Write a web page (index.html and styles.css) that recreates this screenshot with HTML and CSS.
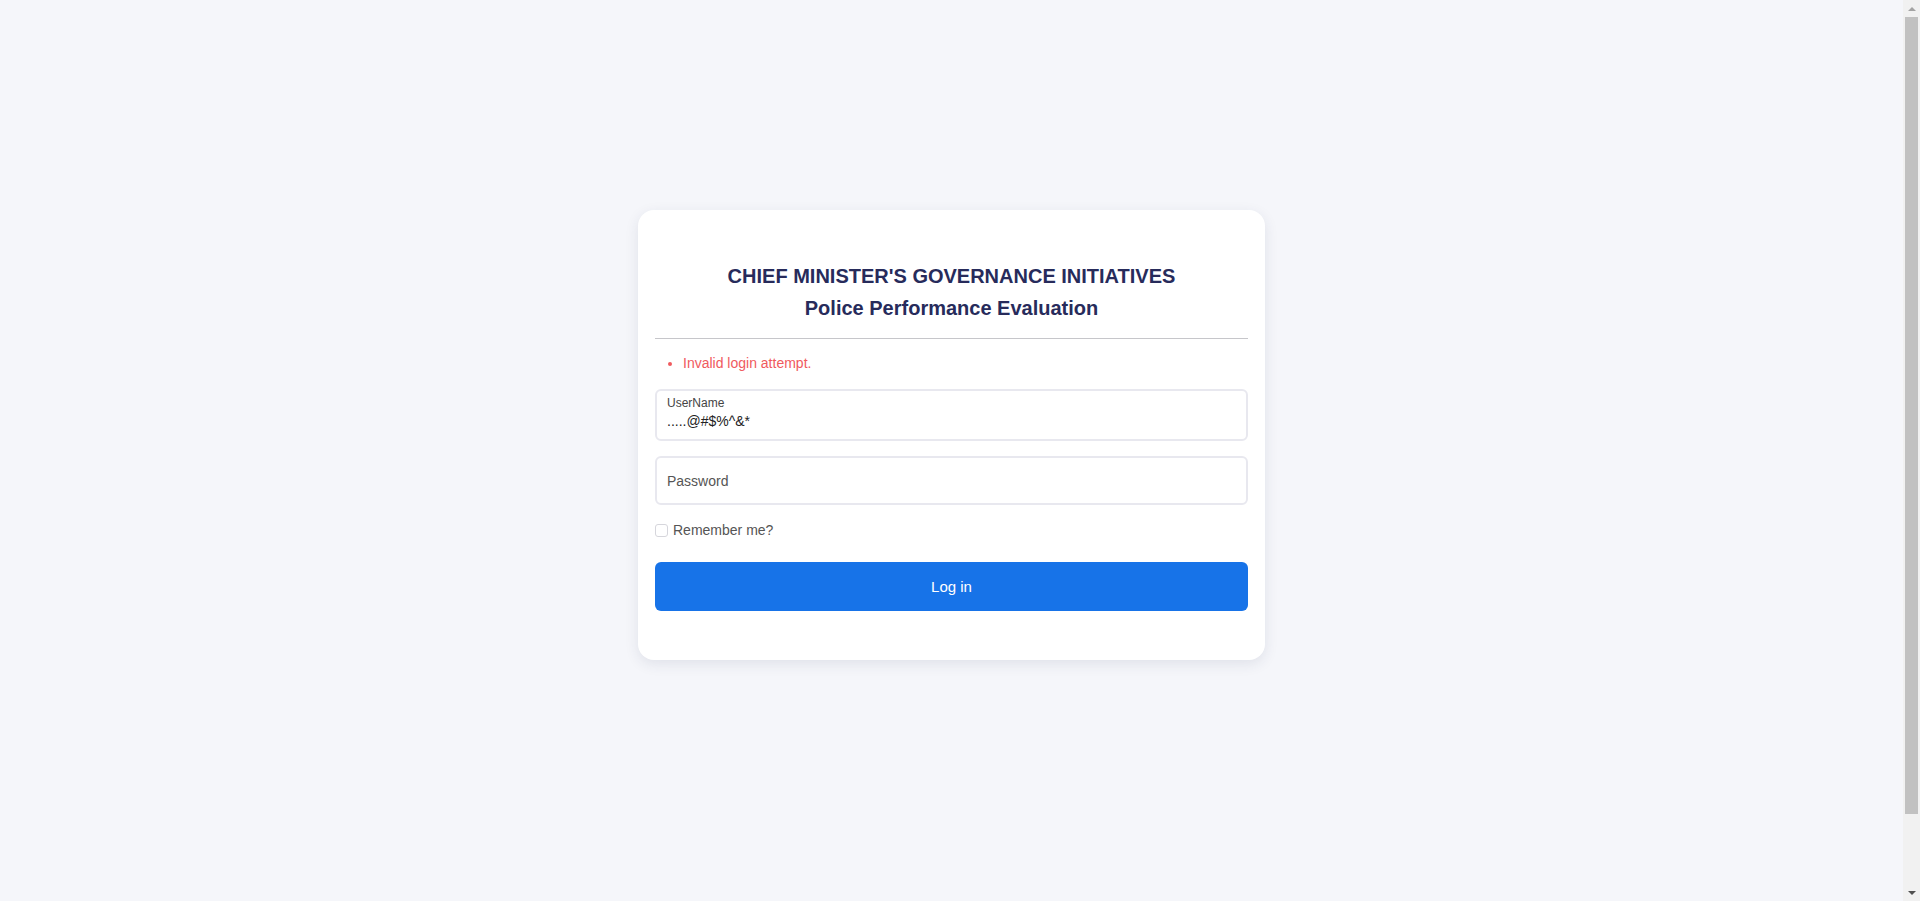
FILE: index.html
```html
<!DOCTYPE html>
<html lang="en">
<head>
<meta charset="utf-8">
<title>Log in - Police Performance Evaluation</title>
<link rel="stylesheet" href="styles.css">
</head>
<body>
<div class="page">
  <main class="card">
    <header class="card-head">
      <h1 class="title">CHIEF MINISTER'S GOVERNANCE INITIATIVES</h1>
      <h2 class="subtitle">Police Performance Evaluation</h2>
    </header>
    <hr class="divider">
    <form class="login-form">
      <ul class="errors">
        <li>Invalid login attempt.</li>
      </ul>
      <div class="field field-filled">
        <label class="field-label" for="user">UserName</label>
        <input class="field-input" id="user" type="text" value=".....@#$%^&amp;*">
      </div>
      <div class="field field-empty">
        <input class="field-input" id="pass" type="password" placeholder="Password">
      </div>
      <label class="remember">
        <span class="check"></span>
        <span class="remember-text">Remember me?</span>
      </label>
      <button class="btn-login" type="button">Log in</button>
    </form>
  </main>
</div>
<div class="scrollbar" aria-hidden="true">
  <span class="sb-arrow sb-up"></span>
  <span class="sb-track"><span class="sb-thumb"></span></span>
  <span class="sb-arrow sb-down"></span>
</div>
</body>
</html>
```

FILE: styles.css
```css
* {
  box-sizing: border-box;
}

html, body {
  margin: 0;
  padding: 0;
}

body {
  background: #f5f6fa;
  font-family: "Liberation Sans", Arial, sans-serif;
  color: #333;
}

.page {
  display: flex;
  justify-content: center;
  align-items: flex-start;
  padding: 210px 17px 335px 0;
}

.card {
  width: 627px;
  background: #ffffff;
  border-radius: 16px;
  box-shadow: 0 4px 14px rgba(40, 50, 90, 0.10);
  padding: 50px 17px 49px;
}

.card-head {
  text-align: center;
}

.title,
.subtitle {
  margin: 0;
  font-size: 20px;
  font-weight: bold;
  line-height: 32px;
  color: #272b5b;
}

.divider {
  border: 0;
  border-top: 1px solid #c6c6ca;
  margin: 14px 0 0;
  height: 0;
}

.login-form {
  display: flex;
  flex-direction: column;
}

.errors {
  margin: 14px 0 0;
  padding-left: 28px;
  color: #f05a5e;
  font-size: 14px;
  line-height: 20px;
}

.field {
  border: 2px solid #e8e8ef;
  border-radius: 6px;
  background: #fff;
  padding: 0 10px;
}

.field-filled {
  margin-top: 16px;
  height: 52px;
  padding-top: 4px;
  display: flex;
  flex-direction: column;
}

.field-label {
  font-size: 12px;
  line-height: 16px;
  color: #444;
}

.field-empty {
  margin-top: 15px;
  height: 49px;
  display: flex;
  align-items: center;
}

.field-input {
  border: 0;
  outline: none;
  padding: 0;
  margin: 0;
  width: 100%;
  font-family: "Liberation Sans", Arial, sans-serif;
  font-size: 14px;
  line-height: 20px;
  color: #222;
  background: transparent;
}

.field-input::placeholder {
  color: #555;
  opacity: 1;
}

.remember {
  margin-top: 15px;
  display: flex;
  align-items: center;
  gap: 5px;
  height: 20px;
  font-size: 14px;
  color: #555;
}

.check {
  width: 13px;
  height: 13px;
  border: 1px solid #d6d6dc;
  border-radius: 3px;
  background: #fff;
}

.btn-login {
  margin-top: 22px;
  height: 49px;
  width: 100%;
  border: 0;
  border-radius: 6px;
  background: #1773e8;
  color: #fff;
  font-family: "Liberation Sans", Arial, sans-serif;
  font-size: 15px;
}

/* classic browser scrollbar, as in the reference capture */
.scrollbar {
  position: fixed;
  top: 0;
  right: 0;
  width: 17px;
  height: 100vh;
  background: #f1f1f1;
  display: flex;
  flex-direction: column;
  align-items: center;
}

.sb-arrow {
  height: 17px;
  width: 17px;
  display: flex;
  align-items: center;
  justify-content: center;
}

.sb-arrow::before {
  content: "";
  border-left: 4px solid transparent;
  border-right: 4px solid transparent;
}

.sb-up::before {
  border-bottom: 4px solid #a3a3a3;
}

.sb-down::before {
  border-top: 4px solid #505050;
}

.sb-track {
  flex: 1;
  width: 100%;
  display: flex;
  justify-content: center;
}

.sb-thumb {
  width: 13px;
  height: 797px;
  background: #c1c1c1;
}
```
